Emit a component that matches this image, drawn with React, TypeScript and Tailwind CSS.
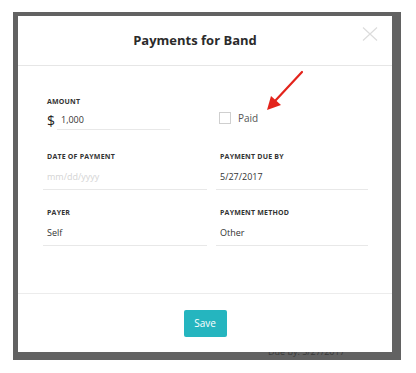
import React from 'react'

const font = { fontFamily: '"Open Sans", "Liberation Sans", sans-serif' }

function Field({
  label,
  value,
  placeholder,
  width,
}: {
  label: string
  value?: string
  placeholder?: string
  width: string
}) {
  return (
    <div className={`${width} border-b border-[#e8e8e8] pl-[4px] pb-[5px]`}>
      <div className="text-[7px] leading-[10px] font-bold tracking-[0.2px] text-[#333]">{label}</div>
      <div
        className={`mt-[8px] text-[9px] leading-[14px] ${value ? 'text-[#333]' : 'text-[#d4d4d4]'}`}
      >
        {value ?? placeholder}
      </div>
    </div>
  )
}

export default function App() {
  return (
    <div className="relative w-[416px] h-[373px] bg-white overflow-hidden" style={font}>
      {/* dimmed page behind the modal */}
      <div className="relative ml-[13px] mt-[12px] w-[388px] h-[348px] bg-[#626262] pl-[5px] pt-[4px]">
        <div className="absolute left-[255px] top-[334px] text-[9px] leading-[12px] text-[#3a3a3a]">
          Due by: 5/27/2017
        </div>

        <div className="relative w-[374px] h-[336px] bg-white flex flex-col">
          {/* header */}
          <div className="relative h-[50px] shrink-0 border-b border-[#e6e6e6] flex items-center justify-center pr-[20px]">
            <span className="text-[13px] font-bold text-[#2b2b2b]">Payments for Band</span>
            <svg
              className="absolute left-[344px] top-[11px]"
              width="16"
              height="14"
              viewBox="0 0 16 14"
            >
              <path d="M1 0.5 L15 13.5 M15 0.5 L1 13.5" stroke="#dcdcdc" strokeWidth="1.2" fill="none" />
            </svg>
          </div>

          {/* body */}
          <div className="flex-1 pl-[25px] pt-[31px] flex flex-col">
            <div className="flex gap-[9px]">
              <div className="w-[164px] pl-[4px]">
                <div className="text-[7px] leading-[10px] font-bold tracking-[0.2px] text-[#333]">AMOUNT</div>
                <div className="flex items-end mt-[5px]">
                  <span className="text-[14px] leading-[18px] text-[#222] w-[10px]">$</span>
                  <div className="w-[113px] border-b border-[#e8e8e8] pb-[2px] pl-[4px] text-[9px] leading-[14px] text-[#333]">
                    1,000
                  </div>
                </div>
              </div>
              <div className="w-[152px] pl-[3px] pt-[15px] flex items-start gap-[7px]">
                <span className="w-[12px] h-[12px] border border-[#cfcfcf] bg-white" />
                <span className="text-[10px] leading-[12px] text-[#555]">Paid</span>
              </div>
            </div>

            <div className="flex gap-[9px] mt-[22px]">
              <Field label="DATE OF PAYMENT" placeholder="mm/dd/yyyy" width="w-[164px]" />
              <Field label="PAYMENT DUE BY" value="5/27/2017" width="w-[152px]" />
            </div>

            <div className="flex gap-[9px] mt-[18px]">
              <Field label="PAYER" value="Self" width="w-[164px]" />
              <Field label="PAYMENT METHOD" value="Other" width="w-[152px]" />
            </div>
          </div>

          {/* footer */}
          <div className="h-[59px] shrink-0 border-t border-[#ececec] flex items-center justify-center">
            <button className="w-[43px] h-[27px] rounded-[2px] bg-[#25b5bf] text-white text-[10px]">
              Save
            </button>
          </div>
        </div>
      </div>

      {/* red annotation arrow */}
      <svg className="absolute left-0 top-0" width="416" height="373" viewBox="0 0 416 373">
        <line x1="302" y1="72" x2="275" y2="101" stroke="#e3241c" strokeWidth="2.2" strokeLinecap="round" />
        <polygon points="267,110 271,96 281,105" fill="#e3241c" />
      </svg>
    </div>
  )
}
